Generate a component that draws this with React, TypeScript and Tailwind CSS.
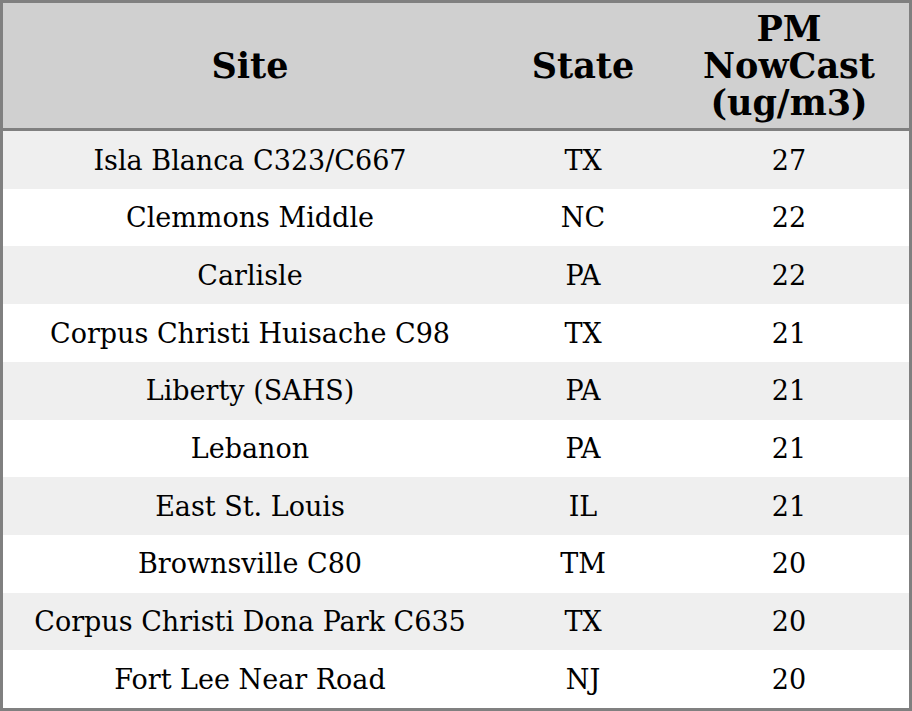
const rows: [string, string, string][] = [
  ["Isla Blanca C323/C667", "TX", "27"],
  ["Clemmons Middle", "NC", "22"],
  ["Carlisle", "PA", "22"],
  ["Corpus Christi Huisache C98", "TX", "21"],
  ["Liberty (SAHS)", "PA", "21"],
  ["Lebanon", "PA", "21"],
  ["East St. Louis", "IL", "21"],
  ["Brownsville C80", "TM", "20"],
  ["Corpus Christi Dona Park C635", "TX", "20"],
  ["Fort Lee Near Road", "NJ", "20"],
];

const App: React.FC = () => {
  return (
    <div className="w-[912px] h-[711px] border-[3px] border-[#808080] bg-white font-['DejaVu_Serif',serif] text-black flex flex-col">
      <div className="grid grid-cols-[494px_172px_1fr] h-[128px] shrink-0 bg-[#d0d0d0] border-b-[3px] border-[#808080] text-[35px] font-bold leading-[37px] text-center">
        <div className="flex items-center justify-center">Site</div>
        <div className="flex items-center justify-center">State</div>
        <div className="flex items-center justify-center">
          PM
          <br />
          NowCast
          <br />
          (ug/m3)
        </div>
      </div>
      <div className="flex-1 grid grid-rows-10">
        {rows.map(([site, state, value], i) => (
          <div
            key={site}
            className={`grid grid-cols-[494px_172px_1fr] items-center pt-[2px] text-center text-[27px] ${
              i % 2 === 0 ? "bg-[#efefef]" : "bg-white"
            }`}
          >
            <div>{site}</div>
            <div>{state}</div>
            <div>{value}</div>
          </div>
        ))}
      </div>
    </div>
  );
};

export default App;
